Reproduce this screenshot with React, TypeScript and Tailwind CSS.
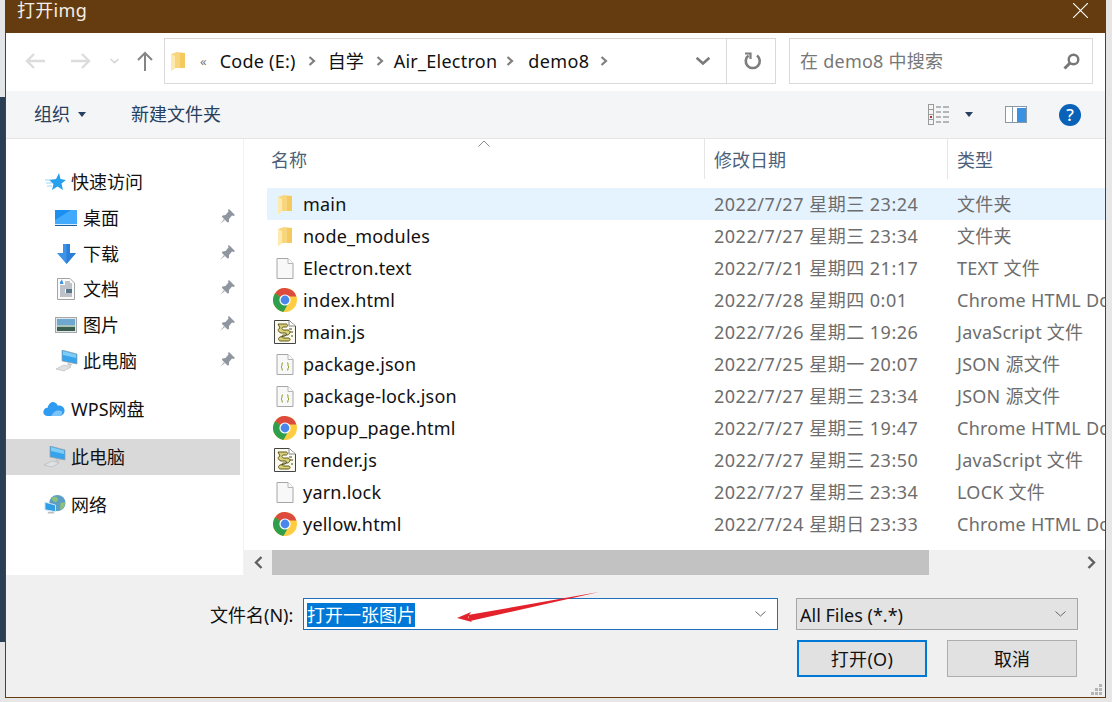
const files = [
  { name: "main", date: "2022/7/27 星期三 23:24", type: "文件夹", icon: "folder", active: true },
  { name: "node_modules", date: "2022/7/27 星期三 23:34", type: "文件夹", icon: "folder" },
  { name: "Electron.text", date: "2022/7/21 星期四 21:17", type: "TEXT 文件", icon: "file" },
  { name: "index.html", date: "2022/7/28 星期四 0:01", type: "Chrome HTML Document", icon: "chrome" },
  { name: "main.js", date: "2022/7/26 星期二 19:26", type: "JavaScript 文件", icon: "script" },
  { name: "package.json", date: "2022/7/25 星期一 20:07", type: "JSON 源文件", icon: "json" },
  { name: "package-lock.json", date: "2022/7/27 星期三 23:34", type: "JSON 源文件", icon: "json" },
  { name: "popup_page.html", date: "2022/7/27 星期三 19:47", type: "Chrome HTML Document", icon: "chrome" },
  { name: "render.js", date: "2022/7/27 星期三 23:50", type: "JavaScript 文件", icon: "script" },
  { name: "yarn.lock", date: "2022/7/27 星期三 23:34", type: "LOCK 文件", icon: "file" },
  { name: "yellow.html", date: "2022/7/24 星期日 23:33", type: "Chrome HTML Document", icon: "chrome" },
];

const Folder = () => (
  <svg width="14" height="21" viewBox="0 0 14 21">
    <path d="M0 3 L6 1 L14 2 L14 17 L4 17 L0 20 Z" fill="#f8d67e" />
    <path d="M0 3 L4 5 L4 17 L0 20 Z" fill="#fdeab0" />
    <path d="M9 2 L14 2 L14 17 L9 17 Z" fill="#f4c95f" />
  </svg>
);

const BlankFile = () => (
  <svg width="18" height="21" viewBox="0 0 18 21">
    <path d="M1 .5 H12 L17 5.5 V20.5 H1 Z" fill="#f8f8f8" stroke="#a6a6a6" />
    <path d="M12 .5 V5.5 H17" fill="#fff" stroke="#b5b5b5" />
  </svg>
);

const JsonFile = () => (
  <svg width="18" height="21" viewBox="0 0 18 21">
    <path d="M1 .5 H12 L17 5.5 V20.5 H1 Z" fill="#f8f8f8" stroke="#a6a6a6" />
    <path d="M12 .5 V5.5 H17" fill="#fff" stroke="#b5b5b5" />
    <path d="M7 9 H6 V12 L5 13 L6 14 V16 H7 M11 9 H12 V12 L13 13 L12 14 V16 H11" fill="none" stroke="#98a338" />
  </svg>
);

const Chrome = () => (
  <svg width="24" height="24" viewBox="0 0 24 24">
    <circle cx="12" cy="12" r="12" fill="#ffcd40" />
    <path d="M12 12 L2 5.5 A12 12 0 0 1 23.4 8.4 L12 8.4 Z" fill="#dd4b3e" />
    <path d="M12 12 L2.1 5.2 A12 12 0 0 0 10.4 23.9 L15 16 Z" fill="#2f9e4d" />
    <circle cx="12" cy="12" r="5.6" fill="#fff" />
    <circle cx="12" cy="12" r="4.4" fill="#4a87ea" />
  </svg>
);

const ScriptFile = () => (
  <svg width="22" height="24" viewBox="0 0 22 24">
    <path d="M.5 .5 H15 L21.5 6 V23.5 H.5 Z" fill="#fbfbf0" stroke="#444" />
    <path d="M15 .5 V6 H21.5" fill="#fff" stroke="#888" />
    <path d="M4 4 H12 C14 4 14 7 12 7 H9 C7 8 8 10 10 10 H14 C17 11 16 14 14 15 H9 C7 16 8 18 10 18 H15 C17 19 16 21 14 21 H6 C4 20 4 18 6 17 L11 16 C13 15 13 13 11 13 H7 C4 12 3 9 6 8 L4 4" fill="#dcd272" stroke="#4f4a1c" strokeWidth=".9" />
    <path d="M15 9 H18 M16 12 H19 M17 16 H19" stroke="#4f4a1c" />
  </svg>
);

const FileIcon = ({ type }: { type: string }) => {
  if (type === "folder") return <Folder />;
  if (type === "chrome") return <Chrome />;
  if (type === "script") return <ScriptFile />;
  if (type === "json") return <JsonFile />;
  return <BlankFile />;
};

const Pin = () => (
  <svg width="16" height="16" viewBox="0 0 16 16">
    <path d="M10 0 L16 6 L14.5 7 L13 6.5 L10 10 L10 13 L8.5 13.5 L2.8 7.8 L3.5 6.5 L6.5 6 L9.5 2.5 L9 1 Z" fill="#8f96a0" />
    <path d="M5 10 L1 15 L6 11 Z" fill="#a9aeb5" />
  </svg>
);

const Star = () => (
  <svg width="21" height="18" viewBox="0 0 21 18">
    <path d="M14 0 L15.5 6 L21 7 L16.5 10.5 L18 17 L12.5 13.5 L7 17 L8.5 11 L4 7 L11 6 Z" fill="#27a1ee" />
    <path d="M0 7 H6 M1 10 H7 M2 13 H7" stroke="#9bd4f6" />
  </svg>
);

const Desktop = () => (
  <svg width="22" height="16" viewBox="0 0 22 16">
    <rect width="22" height="16" fill="#1a8ff0" />
    <path d="M0 14 L0 10 L16 0 H22 V14 Z" fill="#42aafc" />
    <rect y="14" width="22" height="1" fill="#d8ecfb" />
    <rect y="15" width="22" height="1" fill="#16609d" />
  </svg>
);

const Download = () => (
  <svg className="ml-[2px]" width="19" height="20" viewBox="0 0 19 20">
    <path d="M6 0 H13 V9 H19 L9.5 20 L0 9 H6 Z" fill="#3e93e8" />
    <path d="M9.5 0 H13 V9 H19 L9.5 20 Z" fill="#2b7fd8" />
  </svg>
);

const Docs = () => (
  <svg className="ml-[2px]" width="18" height="22" viewBox="0 0 18 22">
    <path d="M.5 .5 H13 L17.5 5 V21.5 H.5 Z" fill="#fbfbfb" stroke="#a3a3a3" />
    <path d="M3 4 L5 1.5 L6.5 6 H3 Z" fill="#3e93e8" />
    <path d="M8 4 H13 M8 6 H15 M3 8 H15 M3 10 H15 M3 12 H8 M3 14 H8 M3 16 H15 M3 18 H15" stroke="#7f8a96" />
    <rect x="9" y="11" width="6" height="4" fill="#56748a" />
  </svg>
);

const Picture = () => (
  <svg width="22" height="16" viewBox="0 0 22 16">
    <rect x=".5" y=".5" width="21" height="15" fill="#dfe6ea" stroke="#a4a8ab" />
    <rect x="2" y="2" width="18" height="6" fill="#6fa8cf" />
    <rect x="2" y="8" width="18" height="2" fill="#a9c5b9" />
    <rect x="2" y="10" width="18" height="4" fill="#3d5f50" />
  </svg>
);

const Computer = () => (
  <svg width="24" height="22" viewBox="0 0 24 22">
    <path d="M7 0 L22 4 V14 L7 11 Z" fill="#36a3ea" stroke="#9a9fa3" strokeWidth=".7" />
    <path d="M8 1 L21 4.5 V8 L8 5 Z" fill="#7ccdf5" />
    <path d="M13 13 L17 14 L16 16 L12 15 Z" fill="#c5c9cc" />
    <path d="M1 19 L9 15 L16 17 L9 21 Z" fill="#dfe2e4" stroke="#b1b5b8" strokeWidth=".6" />
  </svg>
);

const Cloud = () => (
  <svg width="22" height="16" viewBox="0 0 24 17">
    <path d="M5 16 C1 16 0 13 .5 11 C1 8 3 7 5 7 C6 3 9 0 12 1 C15 2 16 4 16 5 C20 4 24 7 23.5 11 C23 14 21 16 18 16 Z" fill="#2f9bf1" />
    <path d="M9 16 C12 10 16 9 21 11 C21 14 20 16 18 16 Z" fill="#7cc3f7" />
  </svg>
);

const Network = () => (
  <svg className="ml-px" width="22" height="22" viewBox="0 0 23 22">
    <circle cx="14" cy="9" r="8.5" fill="#5d9fc4" />
    <path d="M9 3 C13 1 16 4 14 7 C12 9 9 7 8 5 Z M17 9 L22 8 C22 12 20 15 17 16 Z" fill="#8ec07a" />
    <path d="M1 8 L12 11 V18 L1 16 Z" fill="#2f9ee4" stroke="#d5e7f2" />
    <path d="M4 18 H10 L11 20 H4 Z" fill="#b9bec2" />
  </svg>
);

const NavArrow = ({ dir, color }: { dir: string; color: string }) => (
  <svg width="20" height="16" viewBox="0 0 20 16" fill="none" stroke={color} strokeWidth="2.4">
    {dir === "left" ? <path d="M20 8 H2 M9 1 L2 8 L9 15" /> : <path d="M0 8 H18 M11 1 L18 8 L11 15" />}
  </svg>
);

const Crumb = () => (
  <svg width="8" height="10" viewBox="0 0 8 10" fill="none" stroke="#7f7f7f" strokeWidth="2.2">
    <path d="M1.5 1 L6 5 L1.5 9" />
  </svg>
);

const Chevron = ({ color = "#666", w = 11, h = 6, sw = 1 }: { color?: string; w?: number; h?: number; sw?: number }) => (
  <svg width={w} height={h} viewBox="0 0 11 6" fill="none" stroke={color} strokeWidth={sw}>
    <path d="M.5 .5 L5.5 5 L10.5 .5" />
  </svg>
);

const Caret = ({ color }: { color: string }) => (
  <svg width="8" height="5" viewBox="0 0 8 5">
    <path d="M0 0 H8 L4 5 Z" fill={color} />
  </svg>
);

const Sidebar = ({ icon, label, pin, active, sub, className = "" }: any) => (
  <div className={`flex h-[36px] items-center ${active ? "bg-[#d9d9d9]" : ""} ${sub ? "pl-[49px]" : "pl-[37px]"} ${className}`}>
    <span className="flex h-[24px] w-[28px] items-center justify-start">{icon}</span>
    <span className="text-[#111]">{label}</span>
    {pin && <span className="mr-[8px] ml-auto flex -translate-y-px"><Pin /></span>}
  </div>
);

export default function App() {
  return (
    <div className="flex h-[702px] w-[1112px] overflow-hidden bg-[#e6e6e7] text-[18px] leading-[24px] [font-family:'Noto_Sans','Noto_Sans_CJK_SC',sans-serif]">
      <div className="flex h-full w-[5px] shrink-0 flex-col">
        <div className="h-[97px] bg-[#e4e5e7]" />
        <div className="h-[545px] bg-[#2a3f55]" />
      </div>

      <div className="relative flex h-[698px] w-[1101px] shrink-0 flex-col border-x border-b border-[#643c10] bg-white">
        {/* title */}
        <div className="flex h-[33px] shrink-0 items-start justify-between bg-[#643c10] pr-[17px] pl-[11px] text-[#f4efe9]">
          <span className="leading-[20px] tracking-[0.3px]">打开img</span>
          <svg className="mt-[3px]" width="15" height="15" viewBox="0 0 15 15" stroke="#fff" strokeWidth="1.1">
            <path d="M0 0 L15 15 M15 0 L0 15" />
          </svg>
        </div>

        {/* nav row */}
        <div className="flex h-[58px] shrink-0 items-start pt-[5px]">
          <div className="flex h-[46px] w-[158px] shrink-0 items-center pl-[19px]">
            <NavArrow dir="left" color="#dcdcdc" />
            <span className="ml-[26px] flex"><NavArrow dir="right" color="#dcdcdc" /></span>
            <span className="ml-[19px] flex"><Chevron color="#d4d4d4" w={9} h={6} sw={1.8} /></span>
            <span className="ml-[18px] flex">
              <svg width="16" height="20" viewBox="0 0 16 20" fill="none" stroke="#858585" strokeWidth="2">
                <path d="M8 20 V2 M1 9 L8 2 L15 9" />
              </svg>
            </span>
          </div>
          <div className="flex h-[46px] w-[612px] shrink-0 items-center border border-[#d9d9d9] pl-[6px] text-[#111]">
            <Folder />
            <span className="ml-[15px] text-[13px] text-[#777]">«</span>
            <span className="ml-[13px] tracking-[0.25px]">Code (E:)</span>
            <span className="ml-[12px] flex"><Crumb /></span>
            <span className="ml-[12px]">自学</span>
            <span className="ml-[12px] flex"><Crumb /></span>
            <span className="ml-[10px] tracking-[0.25px]">Air_Electron</span>
            <span className="ml-[9px] flex"><Crumb /></span>
            <span className="ml-[14px] tracking-[0.4px]">demo8</span>
            <span className="ml-[10px] flex"><Crumb /></span>
            <span className="ml-[88px] flex"><Chevron color="#7a7a7a" w={14} h={8} sw={2} /></span>
            <div className="ml-auto flex h-full w-[49px] items-center justify-center border-l border-[#d9d9d9] pl-[4px]">
              <svg width="18" height="18" viewBox="0 0 18 18" fill="none" stroke="#7d7d7d" strokeWidth="2.6">
                <path d="M4.5 3.5 A7 7 0 1 0 13 3.5" />
                <path d="M1 1.5 H6.5 V7" strokeWidth="2.2" />
              </svg>
            </div>
          </div>
          <div className="ml-[13px] flex h-[46px] w-[304px] shrink-0 items-center justify-between border border-[#d9d9d9] pr-[12px] pl-[10px] text-[#777]">
            <span className="tracking-[0.25px]">在 demo8 中搜索</span>
            <svg width="17" height="17" viewBox="0 0 17 17" fill="none" stroke="#777">
              <circle cx="10.5" cy="6.5" r="4.8" strokeWidth="2.4" />
              <path d="M7 10 L1.5 15.5" strokeWidth="3" />
            </svg>
          </div>
        </div>

        {/* toolbar */}
        <div className="flex h-[48px] shrink-0 items-center border-b border-[#e5e5e5] bg-[#f4f5f7] pr-[24px] pl-[28px] text-[#26405f]">
          <span className="-translate-y-px">组织</span>
          <span className="ml-[8px] flex"><Caret color="#26405f" /></span>
          <span className="ml-[45px] -translate-y-px">新建文件夹</span>
          <span className="ml-auto flex">
            <svg width="22" height="21" viewBox="0 0 22 21" fill="none">
              <rect x=".5" y=".5" width="5" height="20" fill="#f4f4f4" stroke="#9a9a9a" />
              <path d="M1 5.5 H5 M1 10.5 H5 M1 15.5 H5" stroke="#9a9a9a" />
              <rect x="2" y="12" width="2" height="2" fill="#a33" />
              <path d="M8 3 H13 M15 3 H21 M8 8 H13 M15 8 H21 M8 13 H13 M15 13 H21 M8 18 H13 M15 18 H21" stroke="#777" />
            </svg>
          </span>
          <span className="ml-[15px] flex"><Caret color="#26405f" /></span>
          <span className="ml-[32px] flex">
            <svg width="22" height="17" viewBox="0 0 22 17">
              <rect x=".5" y=".5" width="21" height="16" fill="#fff" stroke="#8a98a6" />
              <rect x="12" y="2" width="9" height="14" fill="#3b91e2" />
              <rect x="7" y="1" width="1" height="15" fill="#8a98a6" />
            </svg>
          </span>
          <span className="ml-[32px] flex h-[22px] w-[22px] items-center justify-center rounded-full bg-[#0a62b8] text-[17px] font-medium text-white">?</span>
        </div>

        {/* main */}
        <div className="flex h-[436px] shrink-0">
          <div className="flex w-[237px] shrink-0 flex-col pt-[25px]">
            <div className="flex h-[36px] items-center pl-[39px]">
              <span className="flex w-[26px] justify-start"><Star /></span>
              <span className="text-[#111]">快速访问</span>
            </div>
            <Sidebar sub pin icon={<Desktop />} label="桌面" />
            <Sidebar sub pin icon={<Download />} label="下载" />
            <Sidebar sub pin icon={<Docs />} label="文档" className="-mt-px" />
            <Sidebar sub pin icon={<Picture />} label="图片" />
            <Sidebar sub pin icon={<Computer />} label="此电脑" />
            <Sidebar icon={<Cloud />} label="WPS网盘" className="mt-[12px]" />
            <Sidebar active icon={<Computer />} label="此电脑" className="mt-[12px] mr-[3px]" />
            <Sidebar icon={<Network />} label="网络" className="mt-[12px]" />
          </div>
          <div className="w-[1px] shrink-0 bg-[#f2f2f2]" />

          <div className="flex min-w-0 flex-1 flex-col overflow-hidden">
            <div className="relative flex h-[49px] shrink-0 text-[#4c607a]">
              <div className="w-[460px] shrink-0 pt-[9px] pl-[27px]">名称</div>
              <div className="h-[40px] w-[243px] shrink-0 border-l border-[#e5e5e5] pt-[9px] pl-[9px]">修改日期</div>
              <div className="h-[40px] flex-1 border-l border-[#e5e5e5] pt-[9px] pl-[9px]">类型</div>
              <svg className="absolute top-[1px] left-[234px]" width="12" height="7" viewBox="0 0 12 7" fill="none" stroke="#8a8a8a">
                <path d="M.5 6.5 L6 1 L11.5 6.5" />
              </svg>
            </div>
            <div className="ml-[23px] flex shrink-0 flex-col">
              {files.map((f) => (
                <div key={f.name} className={`flex h-[32px] items-center whitespace-nowrap ${f.active ? "bg-[#e5f3ff]" : ""}`}>
                  <span className="flex h-[32px] w-[36px] shrink-0 items-center justify-center"><FileIcon type={f.icon} /></span>
                  <span className="w-[401px] shrink-0 tracking-[0.2px] text-[#111]">{f.name}</span>
                  <span className="w-[243px] shrink-0 pl-[10px] tracking-[0.5px] text-[#6d6d6d]">{f.date}</span>
                  <span className="pl-[10px] tracking-[0.25px] text-[#6d6d6d]">{f.type}</span>
                </div>
              ))}
            </div>
            <div className="mt-auto flex h-[25px] shrink-0 items-center bg-[#f0f0f0]">
              <span className="flex w-[28px] shrink-0 justify-center">
                <svg width="9" height="13" viewBox="0 0 9 13" fill="none" stroke="#606060" strokeWidth="2.4"><path d="M7.5 1 L2 6.5 L7.5 12" /></svg>
              </span>
              <div className="h-full w-[657px] shrink-0 bg-[#c2c2c2]" />
              <span className="ml-auto flex w-[28px] justify-center">
                <svg width="9" height="13" viewBox="0 0 9 13" fill="none" stroke="#606060" strokeWidth="2.4"><path d="M1.5 1 L7 6.5 L1.5 12" /></svg>
              </span>
            </div>
          </div>
        </div>

        {/* footer */}
        <div className="flex flex-1 flex-col bg-[#f0f0f0] pt-[23px]">
          <div className="flex h-[32px] items-center">
            <span className="ml-[204px] w-[93px] shrink-0 translate-y-px whitespace-nowrap text-[#111]">文件名(N):</span>
            <div className="flex h-[32px] w-[475px] shrink-0 items-center border border-[#1f70b8] bg-white pr-[11px] pl-[3px]">
              <span className="translate-y-px bg-[#0078d7] text-white">打开一张图片</span>
              <span className="ml-auto flex"><Chevron /></span>
            </div>
            <div className="ml-[18px] flex h-[32px] w-[282px] shrink-0 items-center justify-between border border-[#a6a6a6] bg-[#e3e3e3] pr-[11px] pl-[3px] text-[#111]">
              <span className="translate-y-px">All Files (*.*)</span>
              <Chevron />
            </div>
          </div>
          <div className="mt-[10px] flex">
            <button className="ml-[791px] h-[37px] w-[130px] border-2 border-[#0078d7] bg-[#e1e1e1] pt-[1px] tracking-[0.3px] text-[#111]">打开(O)</button>
            <button className="ml-[20px] h-[37px] w-[130px] border border-[#adadad] bg-[#e1e1e1] pt-[1px] text-[#111]">取消</button>
          </div>
        </div>

        {/* resize grip */}
        <svg className="absolute right-[2px] bottom-[1px]" width="12" height="12" viewBox="0 0 12 12" fill="#b5b5b5">
          <rect x="8" y="0" width="3" height="3" />
          <rect x="4" y="4" width="3" height="3" />
          <rect x="8" y="4" width="3" height="3" />
          <rect x="0" y="8" width="3" height="3" />
          <rect x="4" y="8" width="3" height="3" />
          <rect x="8" y="8" width="3" height="3" />
        </svg>

        {/* red annotation arrow */}
        <svg className="absolute top-[590px] left-[444px]" width="152" height="36" viewBox="0 0 152 36">
          <path d="M149 2 L18 25 L20 31 Z" fill="#e3222b" />
          <path d="M7 28 L21 22 L18 27 L22 32 Z" fill="#e3222b" />
        </svg>
      </div>
    </div>
  );
}
